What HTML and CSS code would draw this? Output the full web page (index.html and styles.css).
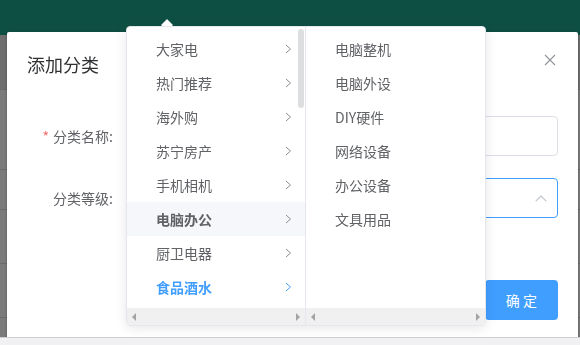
FILE: index.html
```html
<!DOCTYPE html>
<html lang="zh-CN">
<head>
  <meta charset="UTF-8">
  <meta name="viewport" content="width=device-width, initial-scale=1.0">
  <title>添加分类</title>
  <link rel="stylesheet" href="styles.css">
</head>
<body>
  <!-- 背景页面 -->
  <div class="page">
    <div class="topbar"></div>
    <div class="toolbar"></div>
    <div class="row row-tall"></div>
    <div class="row row-short"></div>
    <div class="row"></div>
    <div class="row"></div>
  </div>
  <div class="mask"></div>

  <!-- 对话框 -->
  <div class="dialog-wrap">
    <div class="dialog">
      <div class="dialog-header">
        <span class="dialog-title">添加分类</span>
        <span class="dialog-close">
          <svg width="16" height="16" viewBox="0 0 16 16"><path d="M3 3L13 13M13 3L3 13" stroke="#909399" stroke-width="1.1" fill="none"/></svg>
        </span>
      </div>
      <div class="dialog-body">
        <div class="form-item">
          <label class="form-label"><span class="required">*</span>分类名称:</label>
          <div class="form-control"><div class="input"></div></div>
        </div>
        <div class="form-item">
          <label class="form-label">分类等级:</label>
          <div class="form-control">
            <div class="input select is-focus">
              <svg width="12" height="7" viewBox="0 0 12 7"><path d="M0.8 6.2L6 1L11.2 6.2" stroke="#c0c4cc" stroke-width="1.2" fill="none"/></svg>
            </div>
          </div>
        </div>
      </div>
      <div class="dialog-footer">
        <span class="btn-primary">确 定</span>
      </div>
    </div>
  </div>

  <!-- 级联选择下拉 -->
  <div class="cascader-popper">
    <div class="popper-arrow"></div>
    <div class="cascader-menu first">
      <ul class="menu-list">
        <li class="node">大家电<svg class="arrow" width="7" height="10" viewBox="0 0 7 10"><path d="M1 1L5.5 5L1 9" stroke="currentColor" stroke-width="1" fill="none"/></svg></li>
        <li class="node">热门推荐<svg class="arrow" width="7" height="10" viewBox="0 0 7 10"><path d="M1 1L5.5 5L1 9" stroke="currentColor" stroke-width="1" fill="none"/></svg></li>
        <li class="node">海外购<svg class="arrow" width="7" height="10" viewBox="0 0 7 10"><path d="M1 1L5.5 5L1 9" stroke="currentColor" stroke-width="1" fill="none"/></svg></li>
        <li class="node">苏宁房产<svg class="arrow" width="7" height="10" viewBox="0 0 7 10"><path d="M1 1L5.5 5L1 9" stroke="currentColor" stroke-width="1" fill="none"/></svg></li>
        <li class="node">手机相机<svg class="arrow" width="7" height="10" viewBox="0 0 7 10"><path d="M1 1L5.5 5L1 9" stroke="currentColor" stroke-width="1" fill="none"/></svg></li>
        <li class="node in-path">电脑办公<svg class="arrow" width="7" height="10" viewBox="0 0 7 10"><path d="M1 1L5.5 5L1 9" stroke="currentColor" stroke-width="1" fill="none"/></svg></li>
        <li class="node">厨卫电器<svg class="arrow" width="7" height="10" viewBox="0 0 7 10"><path d="M1 1L5.5 5L1 9" stroke="currentColor" stroke-width="1" fill="none"/></svg></li>
        <li class="node is-active">食品酒水<svg class="arrow" width="7" height="10" viewBox="0 0 7 10"><path d="M1 1L5.5 5L1 9" stroke="currentColor" stroke-width="1" fill="none"/></svg></li>
      </ul>
      <div class="thumb"></div>
      <div class="hscroll"><span class="tri-left"></span><span class="tri-right"></span></div>
    </div>
    <div class="cascader-menu">
      <ul class="menu-list">
        <li class="node">电脑整机</li>
        <li class="node">电脑外设</li>
        <li class="node">DIY硬件</li>
        <li class="node">网络设备</li>
        <li class="node">办公设备</li>
        <li class="node">文具用品</li>
      </ul>
      <div class="hscroll"><span class="tri-left"></span><span class="tri-right"></span></div>
    </div>
  </div>

  <div class="bottom-bar"></div>
</body>
</html>
```

FILE: styles.css
```css
*{
  margin:0;
  padding:0;
  box-sizing:border-box;
}
html, body{
  width:580px;
  height:345px;
  overflow:hidden;
}
body{
  font-family:"Noto Sans CJK SC", "Noto Sans", sans-serif;
  font-size:14px;
  color:#606266;
  background:#fff;
  position:relative;
}
ul{list-style:none;}

/* 背景页面 */
.page{
  width:580px;
  height:345px;
  overflow:hidden;
  background:#f6f6f6;
}
.topbar{
  height:35px;
  background:#1c9f89;
}
.toolbar{
  height:55px;
  background:#dcdcdc;
  border-bottom:1px solid #d2d2d2;
}
.row{
  height:54px;
  background:#f6f6f6;
  border-bottom:1px solid #d8d8d8;
}
.row-tall{height:80px;}
.row-short{height:40px;}

.mask{
  position:fixed;
  top:0; left:0; right:0; bottom:0;
  background:rgba(0,0,0,0.5);
}

/* 对话框 */
.dialog-wrap{
  position:fixed;
  top:0; left:0; right:0; bottom:0;
  overflow:hidden;
}
.dialog{
  margin:32px 2px 0 7px;
  background:#fff;
  border-radius:2px;
  box-shadow:0 1px 3px rgba(0,0,0,0.3);
}
.dialog-header{
  display:flex;
  justify-content:space-between;
  padding:20px 20px 10px;
}
.dialog-title{
  font-size:18px;
  line-height:24px;
  color:#303133;
}
.dialog-close{
  display:flex;
  align-self:flex-start;
}
.dialog-body{
  padding:30px 20px;
}
.form-item{
  display:flex;
  margin-bottom:22px;
}
.form-label{
  width:100px;
  flex:none;
  text-align:right;
  padding-right:14px;
  line-height:40px;
  color:#606266;
}
.required{
  color:#f56c6c;
  margin-right:4px;
}
.form-control{flex:1;}
.input{
  height:40px;
  border:1px solid #dcdfe6;
  border-radius:4px;
}
.select{
  display:flex;
  align-items:center;
  justify-content:flex-end;
  padding-right:10px;
}
.select.is-focus{border-color:#409eff;}
.dialog-footer{
  padding:10px 20px 20px;
  display:flex;
  justify-content:flex-end;
}
.btn-primary{
  display:inline-block;
  height:40px;
  line-height:40px;
  padding:0 21px;
  background:#409eff;
  color:#fff;
  border-radius:4px;
  font-size:14px;
  white-space:pre;
}

/* 级联下拉 */
.cascader-popper{
  position:absolute;
  left:126px;
  top:26px;
  width:360px;
  height:300px;
  display:flex;
  background:#fff;
  border:1px solid #e4e7ed;
  border-radius:4px;
  box-shadow:0 2px 12px rgba(0,0,0,0.1);
}
.popper-arrow{
  position:absolute;
  left:34px;
  top:-13px;
  border:6px solid transparent;
  border-bottom-color:#fff;
  filter:drop-shadow(0 -1px 0 #ebeef5);
}
.cascader-menu{
  width:179px;
  display:flex;
  flex-direction:column;
  position:relative;
}
.cascader-menu.first{
  border-right:1px solid #e4e7ed;
}
.menu-list{
  flex:1;
  padding-top:5px;
}
.node{
  display:flex;
  align-items:center;
  height:34px;
  line-height:34px;
  padding:0 13px 0 29px;
  color:#606266;
}
.node .arrow{
  margin-left:auto;
  color:#8a8c91;
}
.node.in-path{
  background:#f5f7fa;
  font-weight:bold;
}
.node.is-active{
  color:#409eff;
  font-weight:bold;
}
.node.is-active .arrow{color:#409eff;}
.thumb{
  position:absolute;
  right:1px;
  top:2px;
  width:6px;
  height:79px;
  border-radius:3px;
  background:rgba(144,147,153,0.3);
}
.hscroll{
  height:17px;
  background:#f0f0f0;
  display:flex;
  align-items:center;
  justify-content:space-between;
  padding:0 5px;
}
.hscroll span{
  width:0; height:0;
  border-top:4px solid transparent;
  border-bottom:4px solid transparent;
}
.tri-left{border-right:4px solid #a3a3a3;}
.tri-right{border-left:4px solid #a3a3a3;}

.bottom-bar{
  position:fixed;
  left:0; right:0; bottom:0;
  height:8px;
  background:#f1f1f4;
  border-top:1px solid #cdcdd5;
}
```
